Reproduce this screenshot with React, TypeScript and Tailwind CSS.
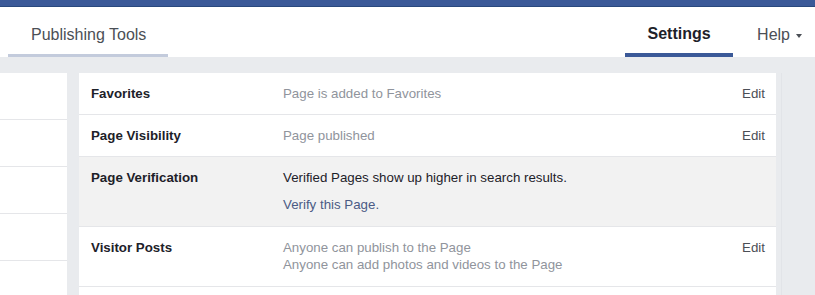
import React from "react";

function Row({
  label,
  children,
  edit,
  shaded,
}: {
  label: string;
  children: React.ReactNode;
  edit?: boolean;
  shaded?: boolean;
}) {
  return (
    <div
      className={`flex border-b border-[#e5e6e9] pl-[12px] pr-[11px] pt-[13px] pb-[12px] ${
        shaded ? "bg-[#f2f2f2]" : "bg-white"
      }`}
    >
      <div className="w-[192px] shrink-0 font-bold text-[#1d2129] leading-[16px]">{label}</div>
      <div className="flex-1">{children}</div>
      {edit && <div className="text-[#4b4f56] leading-[16px]">Edit</div>}
    </div>
  );
}

export default function App() {
  return (
    <div className="w-[815px] h-[295px] overflow-hidden bg-[#e9ebee] font-['Liberation_Sans',Arial,sans-serif]">
      <div className="h-[7px] bg-[#3b5998] border-b border-[#29487d]" />
      <nav className="h-[50px] bg-white flex items-stretch">
        <div className="ml-[8px] w-[160px] flex flex-col justify-end">
          <div className="pl-[23px] text-[16px] leading-[20px] text-[#4b4f56] pb-[9px]">Publishing Tools</div>
          <div className="h-[3px] bg-[#c3cbdc]" />
        </div>
        <div className="flex-1" />
        <div className="w-[108px] flex flex-col justify-end">
          <div className="text-center text-[16px] leading-[20px] font-bold text-[#1d2129] pb-[9px]">Settings</div>
          <div className="h-[4px] bg-[#3b5998]" />
        </div>
        <div className="ml-[24px] mr-[13px] flex items-center gap-[6px] pt-[6px] text-[16px] leading-[20px] text-[#4b4f56]">
          <span>Help</span>
          <svg width="6" height="4" viewBox="0 0 6 4" className="mt-[1px]">
            <path d="M0 0 L6 0 L3 4 Z" fill="#4b4f56" />
          </svg>
        </div>
      </nav>
      <div className="flex pt-[16px]">
        <div className="w-[67px] bg-white shrink-0">
          <div className="h-[47px] border-b border-[#e5e6e9]" />
          <div className="h-[47px] border-b border-[#e5e6e9]" />
          <div className="h-[47px] border-b border-[#e5e6e9]" />
          <div className="h-[47px] border-b border-[#e5e6e9]" />
          <div className="h-[47px]" />
        </div>
        <div className="ml-[12px] w-[697px] bg-white text-[13.3px] shrink-0">
          <Row label="Favorites" edit>
            <div className="text-[#90949c] leading-[16px]">Page is added to Favorites</div>
          </Row>
          <Row label="Page Visibility" edit>
            <div className="text-[#90949c] leading-[16px]">Page published</div>
          </Row>
          <Row label="Page Verification" shaded>
            <div className="text-[#1d2129] leading-[16px]">Verified Pages show up higher in search results.</div>
            <div className="text-[#4b5b85] leading-[16px] mt-[11px] pb-[1px]">Verify this Page.</div>
          </Row>
          <Row label="Visitor Posts" edit>
            <div className="text-[#90949c] leading-[17px] -mt-[1px]">Anyone can publish to the Page</div>
            <div className="text-[#90949c] leading-[17px] pb-[1px]">Anyone can add photos and videos to the Page</div>
          </Row>
          <div className="h-[40px]" />
        </div>
        <div className="ml-[5px] w-px h-[240px] bg-[#e2e4e8]" />
      </div>
    </div>
  );
}
